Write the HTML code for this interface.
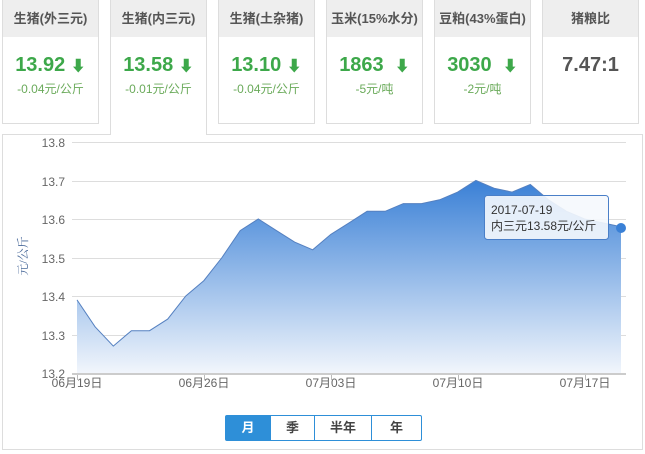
<!DOCTYPE html>
<html><head><meta charset="utf-8"><style>
body{margin:0;width:645px;height:454px;background:#fff;font-family:"Liberation Sans","Noto Sans CJK SC",sans-serif;position:relative;overflow:hidden}
.card{position:absolute;top:0;width:97px;height:124px;border:1px solid #ddd;background:#fff;text-align:center;box-sizing:border-box;border-top:none}
.card .h{height:37px;background:#eee;line-height:37px;font-size:13px;font-weight:bold;color:#555}
.card .v{margin-top:15px;font-size:20px;font-weight:bold;color:#3da84a;height:26px;line-height:26px}
.card .v.g{color:#555}
.card .v span{font-size:15px}
.card .d{font-size:12px;color:#6aaa5a;margin-top:2px}
.active{height:135px;border-bottom:none;z-index:2}
.panel{position:absolute;left:2px;top:134px;width:641px;height:316px;border:1px solid #ddd;box-sizing:border-box}
.btns{position:absolute;left:225px;top:415px;height:26px;border:1px solid #2e8fd8;display:flex;border-radius:2px;box-sizing:border-box}
.btns div{height:24px;line-height:24px;text-align:center;font-size:13px;font-weight:bold;color:#444;border-right:1px solid #2e8fd8}
.btns div:last-child{border-right:none}
</style></head><body>
<div class="card" style="left:2px"><div class="h">生猪(外三元)</div><div class="v">13.92 <span>⬇</span></div><div class="d">-0.04元/公斤</div></div>
<div class="card active" style="left:110px"><div class="h">生猪(内三元)</div><div class="v">13.58 <span>⬇</span></div><div class="d">-0.01元/公斤</div></div>
<div class="card" style="left:218px"><div class="h">生猪(土杂猪)</div><div class="v">13.10 <span>⬇</span></div><div class="d">-0.04元/公斤</div></div>
<div class="card" style="left:326px"><div class="h">玉米(15%水分)</div><div class="v">1863 &nbsp;<span>⬇</span></div><div class="d">-5元/吨</div></div>
<div class="card" style="left:434px"><div class="h">豆粕(43%蛋白)</div><div class="v">3030 &nbsp;<span>⬇</span></div><div class="d">-2元/吨</div></div>
<div class="card" style="left:542px"><div class="h">猪粮比</div><div class="v g">7.47:1</div></div>
<div class="panel"></div>
<svg style="position:absolute;left:0;top:0" width="645" height="454">
<defs><linearGradient id="gr" gradientUnits="userSpaceOnUse" x1="0" y1="180" x2="0" y2="374"><stop offset="0" stop-color="#3a80d6"/><stop offset="1" stop-color="#f2f6fc"/></linearGradient></defs>
<g stroke="#ddd" stroke-width="1">
<line x1="72" x2="626" y1="142.5" y2="142.5"/><line x1="72" x2="626" y1="181.5" y2="181.5"/><line x1="72" x2="626" y1="219.5" y2="219.5"/><line x1="72" x2="626" y1="258.5" y2="258.5"/><line x1="72" x2="626" y1="296.5" y2="296.5"/><line x1="72" x2="626" y1="335.5" y2="335.5"/>
</g>
<path d="M77,299.9 L95.1,326.8 113.3,346.1 131.4,330.7 149.5,330.7 167.7,319.1 185.8,296 203.9,280.6 222,257.5 240.2,230.6 258.3,219 276.4,230.6 294.6,242.1 312.7,249.8 330.8,234.4 349,222.9 367.1,211.3 385.2,211.3 403.3,203.6 421.5,203.6 439.6,199.8 457.7,192.1 475.9,180.5 494,188.2 512.1,192.1 530.3,184.4 548.4,199.8 566.5,211.3 584.6,219 602.8,222.9 621,226.7 L621,374 L77,374 Z" fill="url(#gr)"/>
<path d="M77,299.9 L95.1,326.8 113.3,346.1 131.4,330.7 149.5,330.7 167.7,319.1 185.8,296 203.9,280.6 222,257.5 240.2,230.6 258.3,219 276.4,230.6 294.6,242.1 312.7,249.8 330.8,234.4 349,222.9 367.1,211.3 385.2,211.3 403.3,203.6 421.5,203.6 439.6,199.8 457.7,192.1 475.9,180.5 494,188.2 512.1,192.1 530.3,184.4 548.4,199.8 566.5,211.3 584.6,219 602.8,222.9 621,226.7" fill="none" stroke="#5580c0" stroke-width="1"/>
<g stroke="#bbb"><line x1="77.5" x2="77.5" y1="374" y2="380"/><line x1="204.5" x2="204.5" y1="374" y2="380"/><line x1="331.5" x2="331.5" y1="374" y2="380"/><line x1="458.5" x2="458.5" y1="374" y2="380"/><line x1="585.5" x2="585.5" y1="374" y2="380"/></g>
<line x1="72" x2="626" y1="374" y2="374" stroke="#ccc" stroke-width="2"/>
<g font-size="12" fill="#666" text-anchor="end" font-family="Liberation Sans,sans-serif">
<text x="65" y="147">13.8</text><text x="65" y="186">13.7</text><text x="65" y="224">13.6</text><text x="65" y="263">13.5</text><text x="65" y="301">13.4</text><text x="65" y="340">13.3</text><text x="65" y="378">13.2</text>
</g>
<text transform="translate(27,256) rotate(-90)" font-size="12" fill="#4a6a9a" text-anchor="middle" font-family="Liberation Serif,Noto Serif CJK SC,serif">元/公斤</text>
<g font-size="12" fill="#666" text-anchor="middle">
<text x="77" y="387">06月19日</text><text x="204" y="387">06月26日</text><text x="331" y="387">07月03日</text><text x="458" y="387">07月10日</text><text x="585" y="387">07月17日</text>
</g>
<rect x="484.5" y="195.5" width="124" height="44" rx="3" fill="rgba(245,248,253,0.9)" stroke="#4a7fc8"/>
<text x="491" y="214" font-size="12" fill="#333">2017-07-19</text>
<text x="491" y="230" font-size="12" fill="#333">内三元13.58元/公斤</text>
<circle cx="621" cy="228" r="5" fill="#3a80d6"/>
</svg>
<div class="btns"><div style="width:44px;background:#2e8fd8;color:#fff">月</div><div style="width:43px">季</div><div style="width:56px">半年</div><div style="width:49px">年</div></div>
</body></html>
